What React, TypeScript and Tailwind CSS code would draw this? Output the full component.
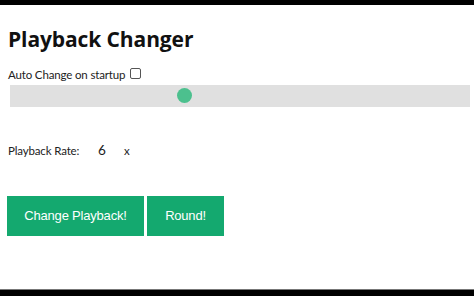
import React, { useState } from 'react';

const App: React.FC = () => {
  const [auto, setAuto] = useState(false);
  const [rate, setRate] = useState(6);

  return (
    <div className="w-[474px] h-[296px] bg-white flex flex-col overflow-hidden" style={{ fontFamily: 'Lato, "Open Sans", sans-serif' }}>
      <div className="h-[5px] bg-black shrink-0" />
      <div className="flex-1 flex flex-col px-2">
        <h1 className="mt-[20px] text-[21px] leading-[28px] font-bold text-[#111] tracking-[-0.1px]" style={{ fontFamily: '"Open Sans", sans-serif' }}>Playback Changer</h1>

        <div className="mt-[14px] flex items-center text-[11.5px] leading-[16px] text-[#222] tracking-[-0.15px]">
          <span>Auto Change on startup</span>
          <input
            type="checkbox"
            checked={auto}
            onChange={(e) => setAuto(e.target.checked)}
            className="ml-[5px] w-[11px] h-[11px] appearance-none border border-[#555] rounded-[2px] bg-white -mt-[4px]"
          />
        </div>

        <div className="mt-[2px] ml-[2px] w-[460px] h-[22px] bg-[#e0e0e0] relative">
          <div className="absolute left-[167px] top-[3px] w-[15px] h-[15px] rounded-full bg-[#4cc08e]" />
        </div>

        <div className="mt-[36px] flex items-center text-[11.5px] leading-[16px] text-[#222] tracking-[-0.15px]">
          <span className="w-[90px]">Playback Rate:</span>
          <span className="text-[13.5px] -mt-[3px] w-[26px]" onClick={() => setRate(rate)}>{rate}</span>
          <span>x</span>
        </div>

        <div className="mt-[37px] flex gap-[3px]" style={{ fontFamily: '"Liberation Sans", Arial, sans-serif' }}>
          <button className="w-[137px] h-[40px] bg-[#14a96f] text-white text-[13px] tracking-[-0.2px] -ml-[1px]">Change Playback!</button>
          <button className="w-[77px] h-[40px] bg-[#14a96f] text-white text-[13px] tracking-[-0.2px]">Round!</button>
        </div>
      </div>
      <div className="h-px bg-[#777] shrink-0" />
      <div className="h-[6px] bg-black shrink-0" />
    </div>
  );
};

export default App;
